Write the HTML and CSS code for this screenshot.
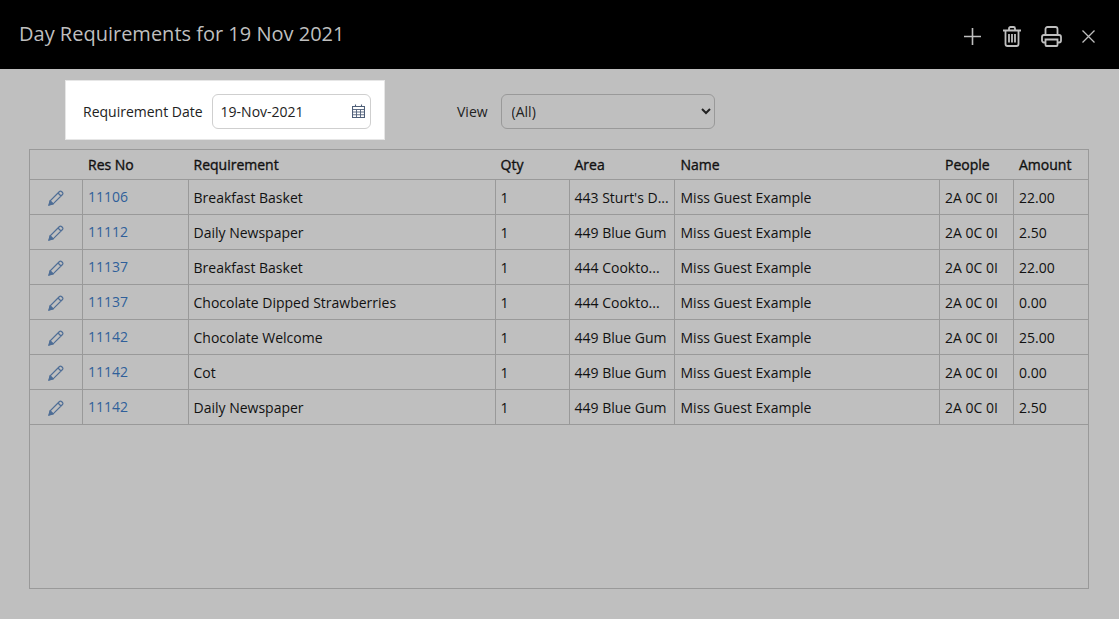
FILE: index.html
```html
<!DOCTYPE html>
<html lang="en">
<head>
<meta charset="utf-8">
<title>Day Requirements</title>
<link rel="stylesheet" href="styles.css">
</head>
<body>
<header class="topbar">
  <h1 class="title">Day Requirements for 19 Nov 2021</h1>
  <div class="actions">
    <svg class="act plus" width="17" height="17" viewBox="0 0 17 17"><path d="M8.500 0v17M0 8.500h17"/></svg>
    <svg class="act" width="18" height="21" viewBox="0 0 18 21"><path d="M0 4.500h18M6 4.500V2.500A1.500 1.500 0 0 1 7.500 1h3A1.500 1.500 0 0 1 12 2.500v2M2.500 4.500v13.500a2 2 0 0 0 2 2h9a2 2 0 0 0 2-2V4.500M6 8v8.500M9 8v8.500M12 8v8.500"/></svg>
    <svg class="act" width="21" height="21" viewBox="0 0 21 21"><path d="M4.500 9V3a2 2 0 0 1 2-2h8a2 2 0 0 1 2 2v6M4.500 16.500H3a2 2 0 0 1-2-2V11a2 2 0 0 1 2-2h15a2 2 0 0 1 2 2v3.500a2 2 0 0 1-2 2h-1.500M4.500 13.500h12V19a1 1 0 0 1-1 1h-10a1 1 0 0 1-1-1z"/></svg>
    <svg class="act close" width="13" height="13" viewBox="0 0 13 13"><path d="M.5.500l12 12M12.500.500l-12 12"/></svg>
  </div>
</header>
<main class="content">
  <div class="filters">
    <div class="date-box">
      <label class="label">Requirement Date</label>
      <div class="date-input">
        <span>19-Nov-2021</span>
        <svg class="cal" width="13" height="14" viewBox="0 0 13 14"><path d="M3.500.5v2M9.500.5v2"/><path d="M.5 2.500h12v11H.5z"/><path class="cal-grid" d="M.5 5.500h12M.5 8h12M.5 10.750h12M4.500 5.500v8M8.500 5.500v8"/></svg>
      </div>
    </div>
    <div class="view-box">
      <label class="label" for="view">View</label>
      <select id="view" class="view-select"><option>(All)</option></select>
    </div>
  </div>
  <div class="grid-wrap">
    <table class="grid">
      <colgroup>
        <col class="c-edit"><col class="c-res"><col class="c-req"><col class="c-qty"><col class="c-area"><col class="c-name"><col class="c-people"><col class="c-amt">
      </colgroup>
      <thead>
        <tr><th></th><th>Res No</th><th>Requirement</th><th>Qty</th><th>Area</th><th>Name</th><th>People</th><th>Amount</th></tr>
      </thead>
      <tbody>
        <tr><td class="edit"><svg class="pencil" width="16" height="16" viewBox="0 0 16 16"><path d="M1.200 14.800l1-4L11.500 1.500a1.400 1.400 0 0 1 2 0l1 1a1.400 1.400 0 0 1 0 2L5.200 13.800zM10 3l3 3M2.200 10.800l3 3"/><path class="pencil-tip" d="M1 15l1.100-3.800 2.700 2.700z"/></svg></td><td><a href="#">11106</a></td><td>Breakfast Basket</td><td>1</td><td>443 Sturt's D...</td><td>Miss Guest Example</td><td>2A 0C 0I</td><td>22.00</td></tr>
        <tr><td class="edit"><svg class="pencil" width="16" height="16" viewBox="0 0 16 16"><path d="M1.200 14.800l1-4L11.500 1.500a1.400 1.400 0 0 1 2 0l1 1a1.400 1.400 0 0 1 0 2L5.200 13.800zM10 3l3 3M2.200 10.800l3 3"/><path class="pencil-tip" d="M1 15l1.100-3.800 2.700 2.700z"/></svg></td><td><a href="#">11112</a></td><td>Daily Newspaper</td><td>1</td><td>449 Blue Gum</td><td>Miss Guest Example</td><td>2A 0C 0I</td><td>2.50</td></tr>
        <tr><td class="edit"><svg class="pencil" width="16" height="16" viewBox="0 0 16 16"><path d="M1.200 14.800l1-4L11.500 1.500a1.400 1.400 0 0 1 2 0l1 1a1.400 1.400 0 0 1 0 2L5.200 13.800zM10 3l3 3M2.200 10.800l3 3"/><path class="pencil-tip" d="M1 15l1.100-3.800 2.700 2.700z"/></svg></td><td><a href="#">11137</a></td><td>Breakfast Basket</td><td>1</td><td>444 Cookto...</td><td>Miss Guest Example</td><td>2A 0C 0I</td><td>22.00</td></tr>
        <tr><td class="edit"><svg class="pencil" width="16" height="16" viewBox="0 0 16 16"><path d="M1.200 14.800l1-4L11.500 1.500a1.400 1.400 0 0 1 2 0l1 1a1.400 1.400 0 0 1 0 2L5.200 13.800zM10 3l3 3M2.200 10.800l3 3"/><path class="pencil-tip" d="M1 15l1.100-3.800 2.700 2.700z"/></svg></td><td><a href="#">11137</a></td><td>Chocolate Dipped Strawberries</td><td>1</td><td>444 Cookto...</td><td>Miss Guest Example</td><td>2A 0C 0I</td><td>0.00</td></tr>
        <tr><td class="edit"><svg class="pencil" width="16" height="16" viewBox="0 0 16 16"><path d="M1.200 14.800l1-4L11.500 1.500a1.400 1.400 0 0 1 2 0l1 1a1.400 1.400 0 0 1 0 2L5.200 13.800zM10 3l3 3M2.200 10.800l3 3"/><path class="pencil-tip" d="M1 15l1.100-3.800 2.700 2.700z"/></svg></td><td><a href="#">11142</a></td><td>Chocolate Welcome</td><td>1</td><td>449 Blue Gum</td><td>Miss Guest Example</td><td>2A 0C 0I</td><td>25.00</td></tr>
        <tr><td class="edit"><svg class="pencil" width="16" height="16" viewBox="0 0 16 16"><path d="M1.200 14.800l1-4L11.500 1.500a1.400 1.400 0 0 1 2 0l1 1a1.400 1.400 0 0 1 0 2L5.200 13.800zM10 3l3 3M2.200 10.800l3 3"/><path class="pencil-tip" d="M1 15l1.100-3.800 2.700 2.700z"/></svg></td><td><a href="#">11142</a></td><td>Cot</td><td>1</td><td>449 Blue Gum</td><td>Miss Guest Example</td><td>2A 0C 0I</td><td>0.00</td></tr>
        <tr><td class="edit"><svg class="pencil" width="16" height="16" viewBox="0 0 16 16"><path d="M1.200 14.800l1-4L11.500 1.500a1.400 1.400 0 0 1 2 0l1 1a1.400 1.400 0 0 1 0 2L5.200 13.800zM10 3l3 3M2.200 10.800l3 3"/><path class="pencil-tip" d="M1 15l1.100-3.800 2.700 2.700z"/></svg></td><td><a href="#">11142</a></td><td>Daily Newspaper</td><td>1</td><td>449 Blue Gum</td><td>Miss Guest Example</td><td>2A 0C 0I</td><td>2.50</td></tr>
      </tbody>
    </table>
  </div>
</main>
</body>
</html>
```
FILE: styles.css
```css
* { box-sizing: border-box; }
html, body { height: 100%; }
body {
  margin: 0;
  background: #bfbfbf;
  font-family: "Open Sans", "Liberation Sans", sans-serif;
  font-size: 14px;
  color: #111;
  overflow: hidden;
}
.topbar {
  height: 69px;
  background: #000;
  display: flex;
  align-items: flex-start;
  justify-content: space-between;
  padding: 20px 24px 0 19px;
}
.title {
  margin: 0;
  font-size: 20px;
  line-height: 27px;
  font-weight: 400;
  color: #bfbfbf;
}
.actions {
  display: flex;
  align-items: center;
  gap: 20px;
  height: 33px;
}
.act {
  fill: none;
  stroke: #bfbfbf;
  stroke-width: 1.800;
  display: block;
}
.act.plus { margin-right: 2px; stroke-width: 1.600; }
.act.close { stroke-width: 1.300; }
.content { padding: 11px 30px 0 29px; }
.filters {
  display: flex;
  align-items: center;
  padding-left: 36px;
  height: 60px;
  margin-bottom: 9px;
}
.date-box {
  width: 320px;
  height: 60px;
  background: #fff;
  display: flex;
  align-items: center;
  padding: 2px 0 0 17px;
  border: 1px solid #e6e6e6;
  gap: 9px;
}
.label { color: #222; line-height: 19px; }
.date-input {
  width: 159px;
  height: 35px;
  border: 1px solid #cfcfcf;
  border-radius: 6px;
  display: flex;
  align-items: center;
  justify-content: space-between;
  padding: 0 5px 0 8px;
  color: #222;
}
.cal { fill: none; stroke: #4f5f78; stroke-width: 1.100; display: block; }
.cal-grid { stroke-width: .9; }
.view-box {
  display: flex;
  align-items: center;
  gap: 13px;
  margin: 2px 0 0 72px;
}
.view-select {
  width: 214px;
  height: 35px;
  border: 1px solid #999;
  border-radius: 6px;
  background-color: #bfbfbf;
  font: inherit;
  color: #222;
  padding: 0 6px;
}
.grid-wrap {
  height: 440px;
  width: 1060px;
  border: 1px solid #999;
}
.grid {
  border-collapse: collapse;
  table-layout: fixed;
  width: 1058px;
}
.c-edit { width: 52px; }
.c-res { width: 106px; }
.c-req { width: 307px; }
.c-qty { width: 74px; }
.c-area { width: 105px; }
.c-name { width: 265px; }
.c-people { width: 74px; }
.c-amt { width: 75px; }
.grid th, .grid td {
  border: 1px solid #999;
  padding: 0 5px;
  text-align: left;
  white-space: nowrap;
  overflow: hidden;
}
.grid th:nth-child(6), .grid td:nth-child(6) { padding-left: 6px; }
.grid th:nth-child(2), .grid td:nth-child(2),
.grid th:nth-child(n+7), .grid td:nth-child(n+7) { padding-left: 5.500px; }
.grid tr:first-child th { border-top: 0; }
.grid th:first-child, .grid td:first-child { border-left: 0; }
.grid th:last-child, .grid td:last-child { border-right: 0; }
.grid th {
  height: 29px;
  padding-top: 1px;
  font-weight: 400;
  -webkit-text-stroke: .35px #111;
  border-left-color: transparent;
  border-right-color: transparent;
}
.grid td { height: 35px; padding-top: 1px; }
.grid a { color: #2f5f9a; text-decoration: none; position: relative; top: -1px; }
.grid td.edit { text-align: center; padding: 0; }
.pencil { fill: none; stroke: #4f6e96; stroke-width: 1.200; display: inline-block; vertical-align: middle; }
.pencil-tip { fill: #4f6e96; }
```
